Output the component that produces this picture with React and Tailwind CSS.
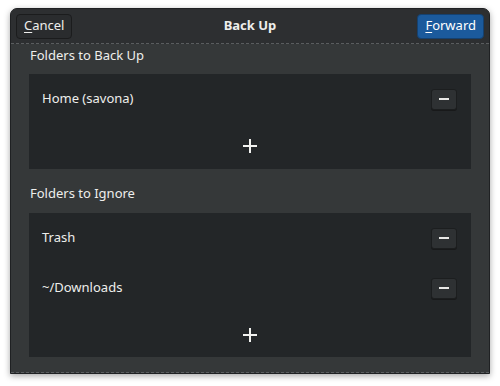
import React from "react";

function Minus() {
  return (
    <button className="w-[26px] h-[21px] rounded-[3px] bg-[#2e3133] border border-[#1c1e1f] shadow-[0_1px_0_#18191a] flex items-center justify-center">
      <span className="block w-[10px] h-[2px] bg-[#e8e8e6]" />
    </button>
  );
}

function Plus() {
  return (
    <svg width="14" height="14" viewBox="0 0 14 14">
      <rect x="6" y="0" width="2" height="14" fill="#f2f2f0" />
      <rect x="0" y="6" width="14" height="2" fill="#f2f2f0" />
    </svg>
  );
}

function Row({ label }) {
  return (
    <div className="h-[50px] flex items-center justify-between pl-[13px] pr-[14px]">
      <span>{label}</span>
      <Minus />
    </div>
  );
}

export default function App() {
  return (
    <div className="w-[500px] h-[386px] bg-white pt-[8px] px-[10px]" style={{ fontFamily: '"Noto Sans", "Open Sans", sans-serif' }}>
      <div className="w-[480px] h-[366px] rounded-t-[7px] bg-[#353839] shadow-[0_2px_6px_rgba(0,0,0,0.35)] flex flex-col text-[13px] text-[#eeeeec] overflow-hidden border border-[#1f2123]">
        <div className="h-[35px] shrink-0 bg-[#2d2f31] flex items-center justify-between px-[5px] border-b border-dashed border-[#5a5d5f] relative">
          <button className="h-[25px] px-[7px] rounded-[4px] bg-[#2a2c2e] border border-[#1b1c1d] text-[#eeeeec] text-[13px]">
            <span className="underline underline-offset-2">C</span>ancel
          </button>
          <span className="absolute left-1/2 -translate-x-1/2 font-bold">Back Up</span>
          <button className="h-[25px] px-[7px] rounded-[4px] bg-[#1b5a9c] border border-[#15416f] text-white text-[13px]">
            <span className="underline underline-offset-2">F</span>orward
          </button>
        </div>
        <div className="flex-1 px-[18px] flex flex-col">
          <div className="h-[28px] flex items-center pl-[1px] pb-[4px]">Folders to Back Up</div>
          <div className="mt-[2px] h-[95px] bg-[#232628] flex flex-col">
            <Row label="Home (savona)" />
            <div className="flex-1 flex items-center justify-center pb-[2px]"><Plus /></div>
          </div>
          <div className="h-[44px] flex items-center pl-[1px] pt-[6px]">Folders to Ignore</div>
          <div className="h-[144px] bg-[#232628] flex flex-col">
            <Row label="Trash" />
            <Row label="~/Downloads" />
            <div className="flex-1 flex items-center justify-center"><Plus /></div>
          </div>
        </div>
        <div className="h-[14px] shrink-0 border-b border-dashed border-[#5a5d5f]" />
      </div>
    </div>
  );
}
